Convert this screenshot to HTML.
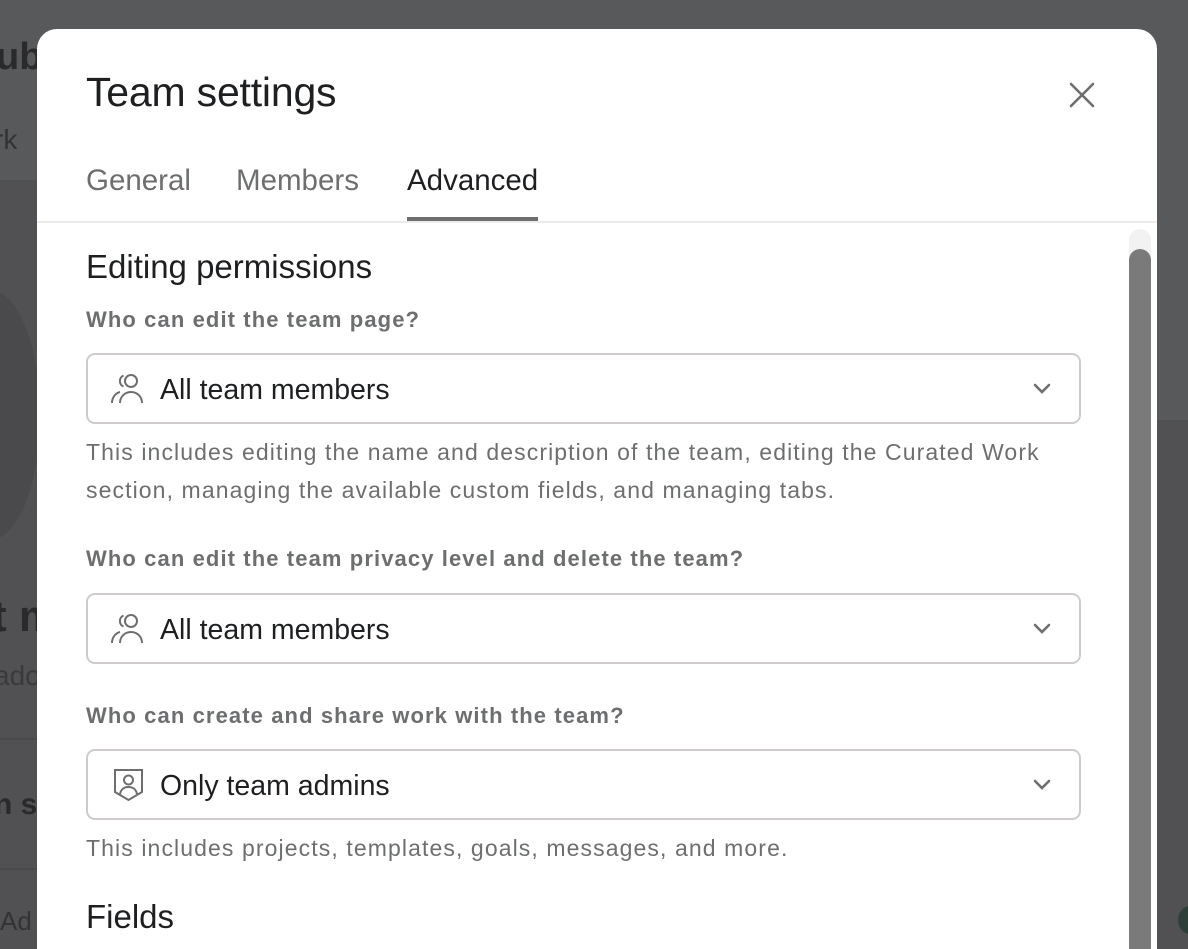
<!DOCTYPE html>
<html><head><style>
*{margin:0;padding:0;box-sizing:border-box}
body{width:1188px;height:926px;overflow:hidden;background:#515153;font-family:"Liberation Sans",Arial,sans-serif;position:relative}
.bgtop{position:absolute;left:0;top:0;width:1188px;height:180px;background:#58595b}
.bgr{position:absolute;left:1157px;top:180px;width:31px;height:240px;background:#58595b}
.bgt{position:absolute;color:#2a2a2b;font-weight:bold}
.modal{position:absolute;left:37px;top:29px;width:1120px;height:920px;background:#fff;border-radius:20px 20px 0 0;overflow:hidden}
.title{position:absolute;left:49px;top:40px;font-size:41px;color:#1e1f21;letter-spacing:-0.2px}
.close{position:absolute;left:1032px;top:53px}
.tab{position:absolute;top:135px;font-size:29.5px;color:#6d6e6f}
.ul{position:absolute;left:370px;top:188px;width:131px;height:4px;background:#6d6e6f}
.div{position:absolute;left:0;top:192px;width:1120px;height:2px;background:#edeaea}
.h{position:absolute;left:49px;font-size:33px;color:#1e1f21}
.lbl{position:absolute;left:49px;font-size:22px;color:#6d6e6f;font-weight:bold;letter-spacing:1.1px}
.sel{position:absolute;left:49px;width:995px;height:71px;border:2px solid #d0cbcb;border-radius:9px}
.sel span{position:absolute;left:72px;top:19px;font-size:28.5px;color:#1e1f21}
.sel svg.ic{position:absolute;left:22px;top:18px}
.sel svg.ch{position:absolute;left:945px;top:28px}
.desc{position:absolute;left:49px;font-size:23px;color:#6d6e6f;line-height:38px;letter-spacing:1.1px;white-space:nowrap}
.track{position:absolute;left:1092px;top:200px;width:22px;height:720px;background:#f2f2f2;border-radius:11px}
.thumb{position:absolute;left:1092px;top:220px;width:22px;height:720px;background:#7a7a7a;border-radius:11px}
</style></head><body>
<div class="bgtop"></div><div class="bgr"></div>
<div style="position:absolute;left:-60px;top:290px;width:100px;height:250px;border-radius:50%;background:#4a4a4c"></div>
<div class="bgt" style="left:-4px;top:36px;font-size:38px">ubl</div>
<div class="bgt" style="left:-6px;top:124px;font-size:28px;font-weight:normal;color:#333">rk</div>
<div class="bgt" style="left:-8px;top:592px;font-size:44px">t m</div>
<div class="bgt" style="left:-6px;top:660px;font-size:28px;font-weight:normal;color:#3a3a3a">ado</div>
<div style="position:absolute;left:0;top:738px;width:37px;height:2px;background:#4a4a4c"></div>
<div class="bgt" style="left:-6px;top:788px;font-size:30px">n s</div>
<div style="position:absolute;left:0;top:868px;width:37px;height:2px;background:#4a4a4c"></div>
<div class="bgt" style="left:0px;top:906px;font-size:26px;font-weight:normal;color:#333">Ad</div>
<div style="position:absolute;left:1178px;top:905px;width:30px;height:30px;border-radius:50%;background:#2e3f3a"></div>
<div class="modal">
<div class="title">Team settings</div>
<svg class="close" width="26" height="26" viewBox="0 0 26 26"><path d="M2 2L24 24M24 2L2 24" stroke="#6d6e6f" stroke-width="2.6" stroke-linecap="round"/></svg>
<div class="tab" style="left:49px">General</div>
<div class="tab" style="left:199px">Members</div>
<div class="tab" style="left:370px;color:#1e1f21">Advanced</div>
<div class="div"></div><div class="ul"></div>
<div class="track"></div><div class="thumb"></div>
<div class="h" style="top:219px">Editing permissions</div>
<div class="lbl" style="top:278px">Who can edit the team page?</div>
<div class="sel" style="top:324px"><svg class="ic" width="36" height="32" viewBox="0 0 36 32"><g fill="none" stroke="#6d6e6f" stroke-width="2"><circle cx="21" cy="8" r="6"/><path d="M10 30c0-6.5 5-11 11-11s11 4.5 11 11"/><path d="M13.5 13.5a6 6 0 0 1 0-11"/><path d="M2 30c0-5.5 3.5-10 8-11"/></g></svg><span>All team members</span><svg class="ch" width="18" height="12" viewBox="0 0 18 12"><path d="M2 2L9 9L16 2" fill="none" stroke="#6d6e6f" stroke-width="2.6" stroke-linecap="round"/></svg></div>
<div class="desc" style="top:404px">This includes editing the name and description of the team, editing the Curated Work<br>section, managing the available custom fields, and managing tabs.</div>
<div class="lbl" style="top:517px">Who can edit the team privacy level and delete the team?</div>
<div class="sel" style="top:564px"><svg class="ic" width="36" height="32" viewBox="0 0 36 32"><g fill="none" stroke="#6d6e6f" stroke-width="2"><circle cx="21" cy="8" r="6"/><path d="M10 30c0-6.5 5-11 11-11s11 4.5 11 11"/><path d="M13.5 13.5a6 6 0 0 1 0-11"/><path d="M2 30c0-5.5 3.5-10 8-11"/></g></svg><span>All team members</span><svg class="ch" width="18" height="12" viewBox="0 0 18 12"><path d="M2 2L9 9L16 2" fill="none" stroke="#6d6e6f" stroke-width="2.6" stroke-linecap="round"/></svg></div>
<div class="lbl" style="top:674px">Who can create and share work with the team?</div>
<div class="sel" style="top:720px"><svg class="ic" width="34" height="34" viewBox="0 0 34 34" style="top:17px;left:24px"><g fill="none" stroke="#6d6e6f" stroke-width="2"><path d="M3 2H30V24L16.5 32L3 24Z"/><circle cx="16.5" cy="12" r="4.5"/><path d="M8 26c1-5 4.5-7 8.5-7s7.5 2 8.5 7"/></g></svg><span>Only team admins</span><svg class="ch" width="18" height="12" viewBox="0 0 18 12"><path d="M2 2L9 9L16 2" fill="none" stroke="#6d6e6f" stroke-width="2.6" stroke-linecap="round"/></svg></div>
<div class="desc" style="top:800px">This includes projects, templates, goals, messages, and more.</div>
<div class="h" style="top:869px">Fields</div>
</div>
</body></html>
